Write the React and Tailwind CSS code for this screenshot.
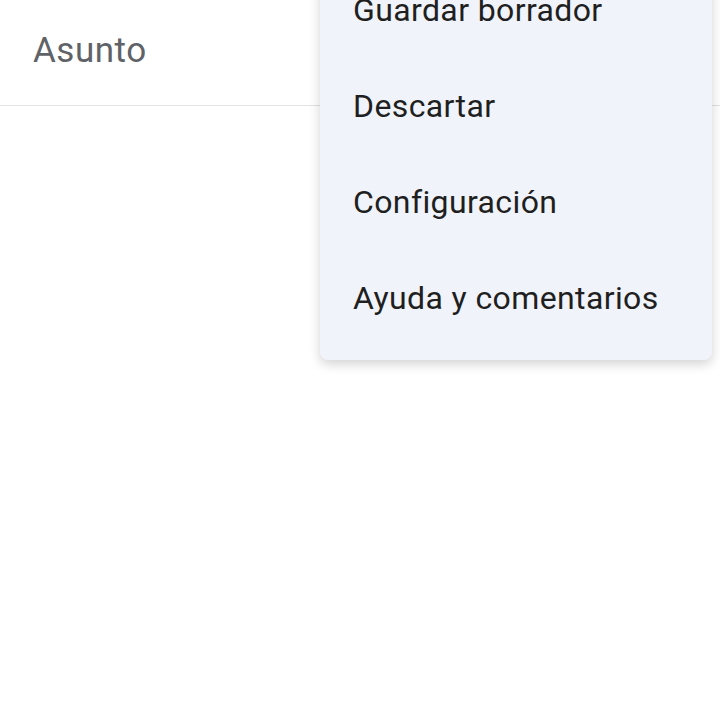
import React from "react";

const items = ["Guardar borrador", "Descartar", "Configuración", "Ayuda y comentarios"];

const App = () => {
  return (
    <div className="relative h-[720px] w-[720px] overflow-hidden bg-white font-['Roboto',sans-serif]">
      {/* subject field */}
      <div className="flex h-[106px] items-center border-b border-[#e3e3e3] px-[33px] pb-[2px]">
        <span className="text-[35px] tracking-[0.015em] text-[#5f6368]">Asunto</span>
      </div>

      {/* overflow menu */}
      <div className="absolute left-[320px] top-[-52px] w-[392px] rounded-lg bg-[#f0f3fa] py-[14px] shadow-[0_4px_12px_rgba(0,0,0,0.18)]">
        {items.map((item) => (
          <div key={item} className="flex h-[96px] items-center px-[33px] text-[32px] tracking-[0.012em] text-[#1f1f1f]">
            {item}
          </div>
        ))}
      </div>
    </div>
  );
};

export default App;
